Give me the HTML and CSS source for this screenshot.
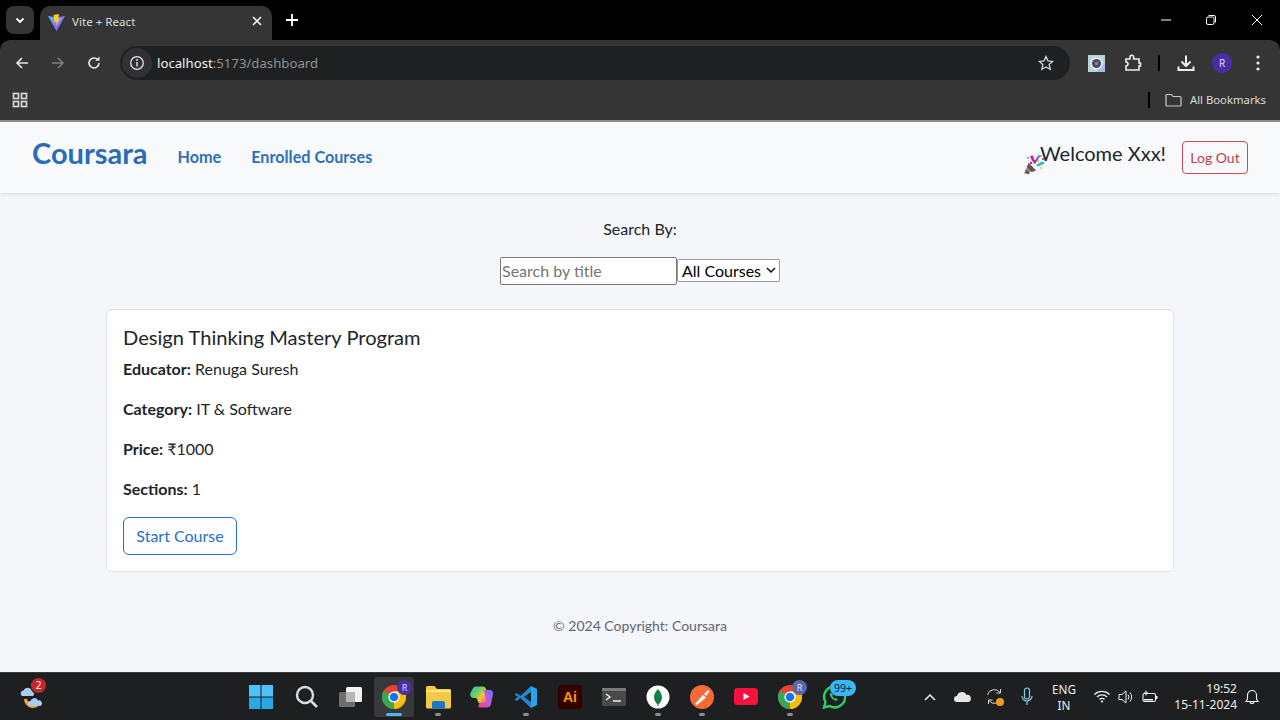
FILE: index.html
```html
<!DOCTYPE html>
<html lang="en">
<head>
<meta charset="utf-8">
<title>Vite + React</title>
<link rel="stylesheet" href="styles.css">
</head>
<body>
<div class="browser">
  <div class="tabstrip">
    <div class="tabmenu"><svg width="12" height="12" viewBox="0 0 12 12"><path d="M2.5 4.5 6 8l3.5-3.5" fill="none" stroke="#fff" stroke-width="1.8"/></svg></div>
    <div class="tab">
      <svg class="favicon" width="17" height="17" viewBox="0 0 17 17"><defs><linearGradient id="vg" x1="0" y1="0" x2="1" y2="1"><stop offset="0" stop-color="#41c8ff"/><stop offset="1" stop-color="#c034fe"/></linearGradient></defs><path d="M0 2 8.5 3.500 17 2 8.500 17z" fill="url(#vg)"/><path d="M11 0 5.500 1 6.500 8.500l2-.4-.3 3.400L12.500 4.500l-2.200.4z" fill="#ffcb1f"/></svg>
      <span class="tabtitle">Vite + React</span>
      <svg class="tabclose" width="10" height="10" viewBox="0 0 10 10"><path d="M1 1l8 8M9 1 1 9" stroke="#fff" stroke-width="1.500"/></svg>
    </div>
    <svg class="newtab" width="14" height="14" viewBox="0 0 14 14"><path d="M7 1v12M1 7h12" stroke="#fff" stroke-width="1.800"/></svg>
    <div class="winctl">
      <svg width="12" height="12" viewBox="0 0 12 12"><path d="M1 6h10" stroke="#fff" stroke-width="1"/></svg>
      <svg class="winrestore" width="12" height="12" viewBox="0 0 12 12"><rect x="1.500" y="3" width="7.500" height="7.500" rx="1.500" fill="none" stroke="#fff"/><path d="M3.500 1.500H9A1.500 1.500 0 0 1 10.500 3v5.500" fill="none" stroke="#fff"/></svg>
      <svg width="12" height="12" viewBox="0 0 12 12"><path d="M1 1l10 10M11 1 1 11" stroke="#fff" stroke-width="1"/></svg>
    </div>
  </div>
  <div class="toolbar">
    <div class="navbtns">
      <svg width="16" height="16" viewBox="0 0 16 16"><path d="M14 8H3M8 3 3 8l5 5" fill="none" stroke="#e6e6e6" stroke-width="1.600"/></svg>
      <svg width="16" height="16" viewBox="0 0 16 16"><path d="M2 8h11M8 3l5 5-5 5" fill="none" stroke="#7d7d7d" stroke-width="1.600"/></svg>
      <svg width="16" height="16" viewBox="0 0 16 16"><path d="M13 8a5 5 0 1 1-1.500-3.600" fill="none" stroke="#e6e6e6" stroke-width="1.600"/><path d="M13.500 1.500v4.300H9.200z" fill="#e6e6e6"/></svg>
    </div>
    <div class="omnibox">
      <div class="siteinfo"><svg width="16" height="16" viewBox="0 0 16 16"><circle cx="8" cy="8" r="6.300" fill="none" stroke="#e6e6e6" stroke-width="1.300"/><path d="M8 7v4.500" stroke="#e6e6e6" stroke-width="1.400"/><circle cx="8" cy="5" r=".9" fill="#e6e6e6"/></svg></div>
      <div class="url"><span class="host">localhost</span>:5173/dashboard</div>
      <svg class="star" width="16" height="16" viewBox="0 0 16 16"><path d="M8 1.500l2 4.400 4.700.5-3.500 3.200 1 4.700L8 11.900l-4.200 2.400 1-4.700L1.300 6.400 6 5.900z" fill="none" stroke="#d8d8d8" stroke-width="1.300"/></svg>
    </div>
    <div class="tools">
      <svg class="ext1" width="17" height="17" viewBox="0 0 17 17"><rect width="17" height="17" fill="#b5d5d8"/><path d="M17 8v9H8z" fill="#a9b8e4"/><circle cx="8.500" cy="8.500" r="6.200" fill="#e9f2f4"/><circle cx="8.500" cy="8.500" r="4.600" fill="#4f4a68"/><circle cx="8.500" cy="8.500" r="1.800" fill="#8a7f9f"/></svg>
      <svg class="ext2" width="18" height="18" viewBox="0 0 18 18"><path d="M2 5h4V3a1.800 1.800 0 0 1 3.600 0v2H15v4h1.500v3H15v4H2v-4a2 2 0 0 0 0-4z" fill="none" stroke="#eee" stroke-width="1.600"/></svg>
      <span class="sep"></span>
      <svg class="dl" width="18" height="18" viewBox="0 0 18 18"><path d="M9 1.500v10M4.500 7.500 9 12l4.500-4.500" fill="none" stroke="#f0f0f0" stroke-width="2"/><path d="M1.500 12.500v3.500h15v-3.500" fill="none" stroke="#f0f0f0" stroke-width="2"/></svg>
      <span class="avatar">R</span>
      <svg class="kebab" width="4" height="16" viewBox="0 0 4 16"><circle cx="2" cy="2" r="1.600" fill="#eee"/><circle cx="2" cy="8" r="1.600" fill="#eee"/><circle cx="2" cy="14" r="1.600" fill="#eee"/></svg>
    </div>
  </div>
  <div class="bookmarks">
    <svg width="16" height="16" viewBox="0 0 16 16"><g fill="none" stroke="#d8d8d8" stroke-width="1.700"><rect x="1.500" y="1.500" width="5" height="5"/><rect x="9.500" y="1.500" width="5" height="5"/><rect x="1.500" y="9.500" width="5" height="5"/><rect x="9.500" y="9.500" width="5" height="5"/></g></svg>
    <span class="bmspacer"></span>
    <span class="bmsep"></span>
    <svg class="folder" width="17" height="14" viewBox="0 0 17 14"><path d="M1 2.500A1 1 0 0 1 2 1.500h4.500l1.500 2h7a1 1 0 0 1 1 1v7.500a1 1 0 0 1-1 1H2a1 1 0 0 1-1-1z" fill="none" stroke="#c8c8c8" stroke-width="1.200"/></svg>
    <span class="allbm">All Bookmarks</span>
  </div>
</div>

<div class="app">
  <nav class="appnav">
    <a class="brand">Coursara</a>
    <a class="navlink">Home</a>
    <a class="navlink">Enrolled Courses</a>
    <span class="navspacer"></span>
    <svg class="popper" width="21" height="21" viewBox="0 0 21 21"><path d="M0 20 4.500 9.500l7 7z" fill="#9a8a80"/><path d="M2 15.500l4 4-2.500.8-2.500-1.800zM4 10.500l6.500 6.500-2.500 1-5-5z" fill="#5f524c"/><path d="M4.500 9 12 16.500l-1 .3L4 10z" fill="#3f3531"/><path d="M6 2 9 1.500l1 4 2 1-1 2-3-1.500z" fill="#d81f7a"/><path d="M9 9l3-4 2.500-3.500 1.500 1-2.500 3.500L11 10z" fill="#7a3fd0"/><path d="M14 1l4 .5-.5 1.500-4-.5zM12 11l6-3.500 2.500 1-1 1.500-5.500 2.500z" fill="#23b4e8"/><circle cx="7" cy="9" r="1.300" fill="#e0245e"/><circle cx="17" cy="14" r="1.100" fill="#ffc517"/><circle cx="14" cy="7" r="1.200" fill="#ffc517"/><circle cx="19" cy="5" r="1.100" fill="#e0245e"/><circle cx="4" cy="4" r="1" fill="#23b4e8"/></svg>
    <span class="welcome">Welcome Xxx!</span>
    <button class="logout">Log Out</button>
  </nav>

  <main class="content">
    <p class="searchlabel">Search By:</p>
    <div class="searchrow">
      <input class="searchinput" type="text" placeholder="Search by title">
      <span class="selectwrap">
        <select class="searchselect"><option>All Courses</option></select>
        <svg class="selectarrow" width="10" height="6" viewBox="0 0 10 6"><path d="M1 1l4 4 4-4" fill="none" stroke="#111" stroke-width="1.500"/></svg>
      </span>
    </div>
    <section class="card">
      <h5 class="cardtitle">Design Thinking Mastery Program</h5>
      <p class="cardline"><b>Educator:</b> Renuga Suresh</p>
      <p class="cardline"><b>Category:</b> IT &amp; Software</p>
      <p class="cardline"><b>Price:</b> ₹1000</p>
      <p class="cardline"><b>Sections:</b> 1</p>
      <button class="startbtn">Start Course</button>
    </section>
  </main>
  <footer class="appfooter">© 2024 Copyright: Coursara</footer>
</div>

<div class="taskbar">
  <div class="tb-left">
    <span class="tb-weather">
      <svg width="26" height="26" viewBox="0 0 26 26"><path d="M5 15a9 9 0 0 0 17 4 9 9 0 0 1-9 1.500A8 8 0 0 1 8 13z" fill="#f5a623"/><rect x="2" y="12" width="13" height="3" fill="#1f1f1f"/><path d="M3 12a3 3 0 0 1 1.500-5.500 4.500 4.500 0 0 1 8.500 1A2.500 2.500 0 0 1 14 12z" fill="#a8cdf0"/><path d="M11 22a2.500 2.500 0 0 1 .5-5 4 4 0 0 1 7.500-.5 2.800 2.800 0 0 1 2 5.500z" fill="#a8cdf0"/></svg>
      <span class="badge-red">2</span>
    </span>
  </div>
  <div class="tb-center">
    <span class="tb-item tb-start"><svg width="24" height="24" viewBox="0 0 24 24"><rect width="11.500" height="11.500" fill="#4fc3f7"/><rect x="12.500" width="11.500" height="11.500" fill="#4fc3f7"/><rect y="12.500" width="11.500" height="11.500" fill="#29a8e8"/><rect x="12.500" y="12.500" width="11.500" height="11.500" fill="#29a8e8"/></svg></span>
    <span class="tb-item"><svg width="23" height="23" viewBox="0 0 23 23"><circle cx="10" cy="10" r="8" fill="none" stroke="#dcdcdc" stroke-width="2.400"/><path d="M16 16l6 6" stroke="#dcdcdc" stroke-width="2.600"/></svg></span>
    <span class="tb-item"><svg width="24" height="22" viewBox="0 0 24 22"><rect x="8" y="1" width="16" height="15" rx="1.500" fill="#f2f2f2"/><rect x="1" y="6" width="16" height="15" rx="1.500" fill="#6e6e6e"/><rect x="8" y="6" width="9" height="10" fill="#b5b5b5"/></svg></span>
    <span class="tb-item tb-active"><svg width="24" height="24" viewBox="0 0 24 24"><circle cx="12" cy="12" r="12" fill="#ea4335"/><path d="M12 12 1.600 18A12 12 0 0 0 12 24z" fill="#34a853"/><path d="M12 12V24A12 12 0 0 0 22.400 6H12z" fill="#fbbc05"/><path d="M12 12 1.600 18A12 12 0 0 1 1.600 6z" fill="#34a853"/><circle cx="12" cy="12" r="5.600" fill="#fff"/><circle cx="12" cy="12" r="4.300" fill="#1a73e8"/></svg><span class="badge-r badge-purple">R</span><span class="under under-blue"></span></span>
    <span class="tb-item"><svg width="26" height="24" viewBox="0 0 26 24"><path d="M1 2.500A1.500 1.500 0 0 1 2.500 1h7l2.500 3h12.500A1.500 1.500 0 0 1 26 5.500V22a1.500 1.500 0 0 1-1.500 1.500h-22A1.500 1.500 0 0 1 1 22z" fill="#f5c944"/><rect x="1" y="5" width="25" height="2" fill="#fbe48a"/><path d="M7 18a2 2 0 0 1 2-2h9a2 2 0 0 1 2 2v5.500H7z" fill="#1976c9"/></svg><span class="under"></span></span>
    <span class="tb-item"><svg width="24" height="22" viewBox="0 0 24 22"><defs><linearGradient id="cp" x1="0" y1="0" x2="1" y2=".8"><stop offset="0" stop-color="#2fb8e0"/><stop offset=".35" stop-color="#5fd06a"/><stop offset=".65" stop-color="#f7c431"/><stop offset="1" stop-color="#ef4f8c"/></linearGradient><linearGradient id="cp2" x1="1" y1="0" x2="0" y2="1"><stop offset="0" stop-color="#6a6ff0"/><stop offset=".55" stop-color="#c85ad8"/><stop offset="1" stop-color="#f0407a"/></linearGradient></defs><path d="M6 .5h6.500c2 0 3 1 3.500 2.500l3 11.500c.5 2-1 3.500-3 3.500h-5c-1.500 0-2.500-1-3-2.500L6.500 12H4C1 12-.500 9.500.500 7L2.500 3C3.200 1.500 4.500.5 6 .5z" fill="url(#cp)"/><path d="M13 4h6.500c2.500 0 4 2 3.500 4.500l-2 9.500c-.7 2.500-2.200 3.500-4 3.500h-7c-1.700 0-2.200-1.500-1-3l2-2h2.500c1.500 0 2.500-1 2.500-2.500L14.500 6.500z" fill="url(#cp2)"/></svg></span>
    <span class="tb-item"><svg width="24" height="24" viewBox="0 0 24 24"><path d="M17 1 6.500 11 2.500 8 .5 9.500 4 12 .5 14.500 2.500 16l4-3L17 23v-6l-7-5 7-5z" fill="#1c8ad6"/><path d="M17 1l6 3v16l-6 3z" fill="#2ba3ee"/></svg><span class="under"></span></span>
    <span class="tb-item"><span class="ai">Ai</span></span>
    <span class="tb-item"><svg width="24" height="18" viewBox="0 0 24 18"><rect width="24" height="18" rx="1.500" fill="#4a4a4a"/><rect width="24" height="3" fill="#7a7a7a"/><path d="M4 6l4 3-4 3" fill="none" stroke="#f0f0f0" stroke-width="1.500"/><path d="M11 13h8" stroke="#f0f0f0" stroke-width="1.500"/></svg></span>
    <span class="tb-item"><svg width="24" height="24" viewBox="0 0 24 24"><circle cx="12" cy="12" r="11.500" fill="#fff"/><path d="M12 4c3 3 4 6 4 8.500S14 18 12.500 19.500V21h-1v-1.500C10 18 8 15.500 8 12.500S9 7 12 4z" fill="#12804a"/></svg><span class="under"></span></span>
    <span class="tb-item"><svg width="24" height="24" viewBox="0 0 24 24"><circle cx="12" cy="12" r="12" fill="#f76935"/><path d="M5 19l8-9 3 2.500L7 20zM14 9l4-4 1.500 1.500-3.500 4.500z" fill="#fff"/></svg><span class="under"></span></span>
    <span class="tb-item"><svg width="24" height="17" viewBox="0 0 24 17"><rect width="24" height="17" rx="3.500" fill="#f5123c"/><path d="M9.500 5v7l6-3.500z" fill="#fff"/></svg></span>
    <span class="tb-item"><svg width="24" height="24" viewBox="0 0 24 24"><circle cx="12" cy="12" r="12" fill="#ea4335"/><path d="M12 12 1.600 18A12 12 0 0 0 12 24z" fill="#34a853"/><path d="M12 12V24A12 12 0 0 0 22.400 6H12z" fill="#fbbc05"/><path d="M12 12 1.600 18A12 12 0 0 1 1.600 6z" fill="#34a853"/><circle cx="12" cy="12" r="5.600" fill="#fff"/><circle cx="12" cy="12" r="4.300" fill="#1a73e8"/></svg><span class="badge-r badge-slate">R</span><span class="under"></span></span>
    <span class="tb-item"><svg width="24" height="24" viewBox="0 0 24 24"><path d="M2 22.500l1.500-5.500A10.500 10.500 0 1 1 7.500 21z" fill="none" stroke="#25d366" stroke-width="2.400"/><path d="M8.500 7.500c-1.500 1.500-.5 4 1.500 6s4.500 3 6 1.500l-2-2-1.300.7-2.500-2.500.7-1.300z" fill="#25d366"/></svg><span class="badge-wa">99+</span></span>
  </div>
  <div class="tb-tray">
    <svg class="tr-chev" width="12" height="8" viewBox="0 0 12 8"><path d="M1 7l5-5 5 5" fill="none" stroke="#f0f0f0" stroke-width="1.500"/></svg>
    <svg class="tr-cloud" width="17" height="11" viewBox="0 0 17 11"><path d="M3 11a3 3 0 0 1 0-6 5 5 0 0 1 9.500-1A3.500 3.500 0 0 1 14 11z" fill="#e8e8e8"/></svg>
    <span class="tr-sync"><svg width="17" height="17" viewBox="0 0 17 17"><path d="M1.500 7A7 7 0 0 1 14 4.500M15.500 10a7 7 0 0 1-12.500 2.500M14.500 1v4h-4M2.500 16v-4h4" fill="none" stroke="#d8d8d8" stroke-width="1"/></svg><span class="dot-orange"></span></span>
    <svg class="tr-mic" width="12" height="19" viewBox="0 0 12 19"><rect x="3.500" y="1" width="5" height="11" rx="2.500" fill="none" stroke="#7fd0ea" stroke-width="1.200"/><path d="M1 9a5 5 0 0 0 10 0M6 14v4" fill="none" stroke="#7fd0ea" stroke-width="1.200"/></svg>
    <span class="tr-lang">ENG<br>IN</span>
    <svg class="tr-wifi" width="16" height="13" viewBox="0 0 16 13"><path d="M.5 4.500a10.500 10.500 0 0 1 15 0M3 7a7 7 0 0 1 10 0M5.500 9.500a3.500 3.500 0 0 1 5 0" fill="none" stroke="#f0f0f0" stroke-width="1.200"/><circle cx="8" cy="11.500" r="1.100" fill="#f0f0f0"/></svg>
    <svg class="tr-vol" width="16" height="14" viewBox="0 0 16 14"><path d="M1 4.500h3L8 1v12L4 9.500H1z" fill="none" stroke="#f0f0f0" stroke-width="1"/><path d="M10 4.500a4 4 0 0 1 0 5M12 2.500a7 7 0 0 1 0 9" fill="none" stroke="#f0f0f0" stroke-width="1"/></svg>
    <svg class="tr-batt" width="16" height="13" viewBox="0 0 16 13"><rect x="1" y="3.500" width="12.500" height="8" rx="1.500" fill="none" stroke="#f0f0f0" stroke-width="1.100"/><rect x="14" y="6" width="1.500" height="3" fill="#f0f0f0"/><path d="M4 .5v5M2 3h4" stroke="#f0f0f0" stroke-width="1"/><path d="M2 9h9v1.500H2z" fill="#f0f0f0"/></svg>
    <span class="tr-clock"><span>19:52</span><span>15-11-2024</span></span>
    <svg class="tr-bell" width="14" height="16" viewBox="0 0 14 16"><path d="M1 12.500 2.500 10V6a4.500 4.500 0 0 1 9 0v4l1.500 2.500zM5 12.500a2 2 0 0 0 4 0" fill="none" stroke="#f0f0f0" stroke-width="1.100"/></svg>
  </div>
</div>
</body>
</html>
```
FILE: styles.css
```css
* { box-sizing: border-box; }
html, body { margin: 0; padding: 0; }
body {
  width: 1280px;
  height: 720px;
  overflow: hidden;
  display: flex;
  flex-direction: column;
  font-family: Lato, "Liberation Sans", sans-serif;
  color: #212529;
  background: #f4f6f9;
}
svg { display: block; flex: none; }

/* Browser chrome */
.browser { flex: none; height: 122px; background: #000; border-bottom: 2px solid #8e8e8e; font-family: "Open Sans", "Noto Sans", sans-serif; }
.tabstrip { height: 40px; display: flex; align-items: flex-start; padding: 6px 0 0 6px; }
.tabmenu { width: 28px; height: 28px; border-radius: 8px; background: #353535; display: flex; align-items: center; justify-content: center; }
.tab { width: 232px; height: 34px; margin-left: 6px; background: #353535; border-radius: 10px 10px 0 0; display: flex; align-items: center; padding: 0 10px 4px 8px; }
.favicon { margin-right: 7px; margin-top: 2px; }
.tabtitle { flex: 1; font-size: 11.600px; color: #dcdcdc; font-family: "Noto Sans", sans-serif; }
.newtab { margin: 7px 0 0 13px; }
.winctl { margin-left: auto; width: 120px; display: flex; justify-content: space-between; padding: 8px 17px 0 0; }
.winrestore { margin-right: 2px; }
.toolbar { height: 40px; background: #353535; border-radius: 10px 10px 0 0; display: flex; align-items: flex-start; padding-top: 6px; }
.navbtns { width: 120px; height: 34px; display: flex; align-items: center; padding-left: 14px; gap: 20px; }
.omnibox { width: 950px; height: 34px; border-radius: 17px; background: #1f2022; display: flex; align-items: center; padding: 0 16px 0 2px; }
.siteinfo { width: 30px; height: 30px; border-radius: 50%; background: #303135; display: flex; align-items: center; justify-content: center; }
.url { flex: 1; margin-left: 5px; margin-top: -1px; font-size: 13.200px; color: #8f9296; font-family: "Noto Sans", sans-serif; }
.host { color: #f1f1f1; }
.tools { flex: 1; height: 34px; display: flex; align-items: center; padding-left: 18px; }
.ext2 { margin-left: 19px; }
.sep { width: 2px; height: 16px; background: #000; margin-left: 16px; }
.dl { margin-left: 17px; }
.avatar { width: 20px; height: 20px; border-radius: 50%; background: #4a2ea8; color: #e8e0ff; font-size: 10px; display: flex; align-items: center; justify-content: center; margin-left: 17px; }
.kebab { margin-left: 24px; }
.bookmarks { height: 40px; background: #353535; display: flex; align-items: center; padding: 0 14px 0 12px; }
.bmspacer { flex: 1; }
.bmsep { width: 2px; height: 16px; background: #000; margin-right: 15px; }
.folder { margin-right: 8px; }
.allbm { font-size: 11.300px; color: #dcdcdc; font-family: "Noto Sans", sans-serif; margin-top: -2px; }

/* App */
.app { flex: 1; min-height: 0; display: flex; flex-direction: column; background: #f4f6f9; }
.appnav { height: 71px; flex: none; background: #f8f9fa; box-shadow: 0 1px 4px rgba(0,0,0,.12); display: flex; align-items: center; padding: 0 32px; }
.brand { font-size: 29px; font-weight: 700; color: #2b6cb8; margin-right: 30px; line-height: 34px; margin-top: -9px; }
.navlink { font-size: 16.200px; font-weight: 700; color: #2f70b9; margin-right: 30px; margin-top: -3px; }
.navspacer { flex: 1; }
.popper { margin-top: 13px; margin-right: -5px; }
.welcome { font-size: 20px; margin-right: 16px; margin-top: -9px; color: #212529; }
.logout { width: 66px; height: 33px; padding: 0; border: 1px solid #d0485a; border-radius: 4px; background: transparent; color: #c8394b; font: 14px Lato, sans-serif; margin-top: -1px; }

.content { flex: none; display: flex; flex-direction: column; align-items: center; }
.searchlabel { margin: 26px 0 0; font-size: 16px; line-height: 20px; height: 20px; }
.searchrow { margin-top: 18px; display: flex; align-items: center; height: 28px; }
.searchinput { width: 177px; height: 28px; padding: 0 1px 2px; border: 1px solid #767676; border-radius: 2px; background: #fff; font: 16px Lato, sans-serif; color: #111; }
.searchinput::placeholder { color: #757575; opacity: 1; }
.selectwrap { position: relative; display: block; width: 103px; height: 23px; margin-top: -1px; }
.searchselect { appearance: none; -webkit-appearance: none; width: 103px; height: 23px; padding: 0 0 0 4px; border: 1px solid #9a9a9a; border-radius: 2px; background: #fff; font: 16px Lato, sans-serif; color: #000; display: block; }
.selectarrow { position: absolute; right: 4px; top: 8px; pointer-events: none; }
.card { width: 1068px; height: 263px; margin-top: 24px; background: #fff; border: 1px solid #dfe2e6; border-radius: 6px; padding: 15px 16px 16px; display: flex; flex-direction: column; align-items: flex-start; }
.cardtitle { margin: 0 0 8px; font-size: 20.100px; font-weight: 400; line-height: 24px; }
.cardline { margin: 0 0 16px; font-size: 16px; line-height: 24px; }
.cardline b { font-weight: 700; }
.startbtn { width: 114px; height: 38px; padding: 0 0 2px; border: 1px solid #1f6fd0; border-radius: 6px; background: transparent; color: #1f6fd0; font: 16px Lato, sans-serif; }
.appfooter { margin-top: 44px; text-align: center; font-size: 14px; line-height: 20px; color: #5f666d; }

/* Taskbar */
.taskbar { flex: none; height: 48px; background: #1e1f21; border-top: 1px solid #3a3a3a; display: flex; align-items: center; font-family: "Noto Sans", sans-serif; color: #f0f0f0; }
.tb-left { width: 240px; padding-left: 19px; display: flex; }
.tb-weather { position: relative; display: block; }
.badge-red { position: absolute; left: 12px; top: -6px; width: 15px; height: 15px; border-radius: 50%; background: #c8252b; color: #fff; font-size: 10px; line-height: 15px; text-align: center; }
.tb-center { width: 616px; display: flex; }
.tb-item { position: relative; width: 44px; height: 40px; flex: none; display: flex; align-items: center; justify-content: center; border-radius: 4px; }
.tb-start { left: -1px; }
.tb-active { border-left: 2px solid #1e1f21; border-right: 2px solid #1e1f21; background: #37383a; }
.under { position: absolute; left: 19px; bottom: 1px; width: 6px; height: 3px; border-radius: 2px; background: #8e8e8e; }
.under-blue { left: 12px; width: 16px; background: #4fb4f0; }
.badge-r { position: absolute; left: 24px; top: 3px; width: 15px; height: 15px; border-radius: 50%; color: #e6e0ff; font-size: 9px; line-height: 15px; text-align: center; }
.badge-purple { left: 23px; background: #4a2ea8; }
.badge-slate { background: #5c64b0; }
.badge-wa { position: absolute; left: 18px; top: 3px; width: 26px; height: 16px; border-radius: 8px; background: #38b6f5; color: #0c2436; font-size: 10.500px; line-height: 16px; text-align: center; }
.ai { width: 24px; height: 24px; border-radius: 4px; background: #330000; color: #ff9a00; font: 700 14px/24px "Liberation Sans", sans-serif; text-align: center; }
.tb-tray { flex: 1; display: flex; align-items: center; padding-left: 68px; }
.tr-cloud { margin-left: 18px; }
.tr-sync { position: relative; margin-left: 15px; display: block; }
.dot-orange { position: absolute; right: -1px; bottom: -1px; width: 8px; height: 8px; border-radius: 50%; background: #f59a1d; }
.tr-mic { margin-left: 18px; }
.tr-lang { width: 40px; margin-left: 11px; font-size: 11.700px; line-height: 16px; text-align: center; }
.tr-wifi { margin-left: 10px; }
.tr-vol { margin-left: 8px; }
.tr-batt { margin-left: 8px; }
.tr-clock { width: 79px; display: flex; flex-direction: column; align-items: flex-end; font-size: 12px; line-height: 16px; }
.tr-bell { margin-left: 8px; }
```
